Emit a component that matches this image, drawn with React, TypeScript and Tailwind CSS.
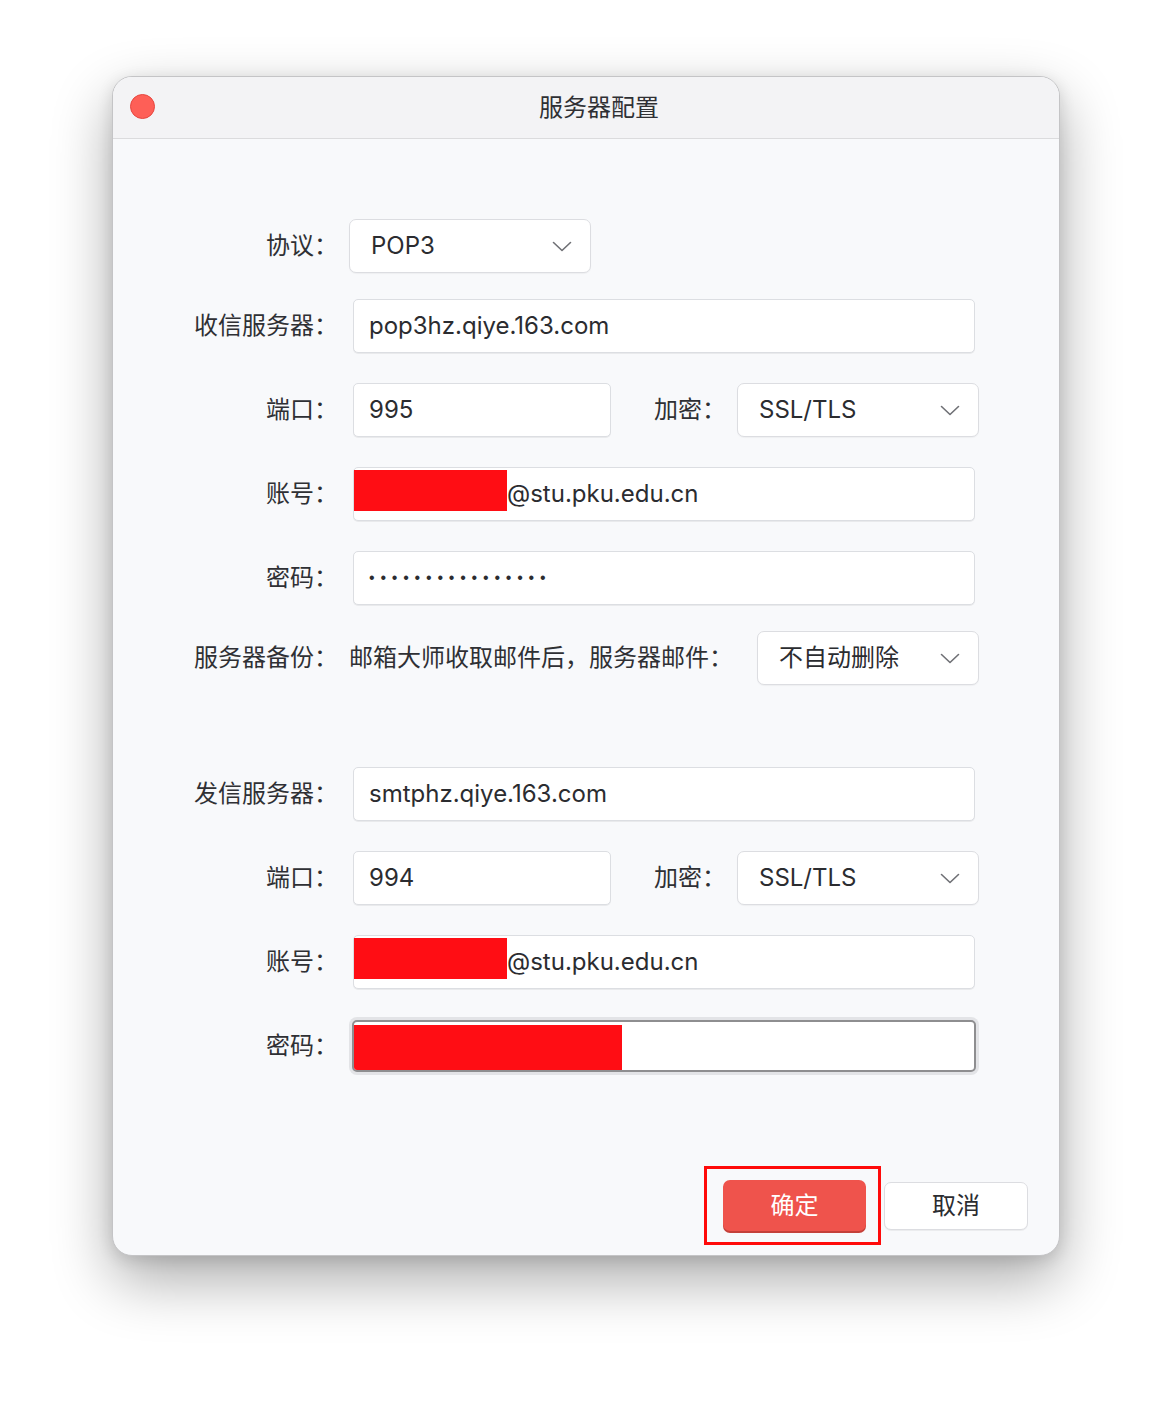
import React from 'react';

const Chevron = () => (
  <svg width="20" height="11" viewBox="0 0 20 11" fill="none" className="shrink-0">
    <path d="M1.5 1.5 L10 9.5 L18.5 1.5" stroke="#6f7075" strokeWidth="1.6" strokeLinecap="round" strokeLinejoin="round" />
  </svg>
);

const Label = ({ text, w = 'w-[225px]' }: { text: string; w?: string }) => (
  <div className={`${w} shrink-0 text-right text-[24px] leading-none text-[#2f3034]`}>{text}</div>
);

const Select = ({ value, w = 'w-[242px]' }: { value: string; w?: string }) => (
  <div className={`${w} h-[54px] shrink-0 flex items-center justify-between pl-[21px] pr-[18px] bg-white border-[1.5px] border-[#dcdde1] rounded-[7px] shadow-[0_1px_1px_rgba(0,0,0,0.04)]`}>
    <span className="text-[24px] leading-none text-[#2b2c30]">{value}</span>
    <Chevron />
  </div>
);

const Input = ({ children, w = 'w-[622px]' }: { children: React.ReactNode; w?: string }) => (
  <div className={`${w} h-[54px] ml-[4px] shrink-0 flex items-center pl-[15px] bg-white border border-[#dcdee2] rounded-[5px] shadow-[0_1px_0_rgba(0,0,0,0.06)] text-[24px] leading-none text-[#2b2c30]`}>
    {children}
  </div>
);

const Account = () => (
  <div className="w-[622px] h-[54px] ml-[4px] shrink-0 flex items-start bg-white border border-[#dcdee2] rounded-[5px] shadow-[0_1px_0_rgba(0,0,0,0.06)]">
    <div className="w-[153px] h-[41px] mt-[2px] bg-[#ff0d14]" />
    <span className="self-center text-[24px] leading-none text-[#2b2c30]">@stu.pku.edu.cn</span>
  </div>
);

const Row = ({ children, className = '' }: { children: React.ReactNode; className?: string }) => (
  <div className={`flex items-center gap-[11px] h-[54px] ${className}`}>{children}</div>
);

export default function App() {
  return (
    <div className="w-[1172px] h-[1404px] bg-white pt-[76px] pl-[112px] font-['Inter','Noto_Sans_CJK_SC',sans-serif]">
      <div className="w-[948px] h-[1180px] rounded-[20px] overflow-hidden bg-[#f8f9fb] border border-[#c4c4c6] shadow-[0_24px_60px_rgba(0,0,0,0.33),0_4px_16px_rgba(0,0,0,0.12)] flex flex-col">
        {/* Title bar */}
        <div className="relative h-[62px] shrink-0 flex items-center justify-center pl-[26px] bg-[#f3f3f5] border-b border-[#dbdbdd]">
          <div className="absolute left-[17px] top-[17px] w-[25px] h-[25px] rounded-full bg-[#fe5f57] border border-[#e5463f]" />
          <span className="text-[24px] leading-none text-[#2f3034]">服务器配置</span>
        </div>

        {/* Body */}
        <div className="flex-1 flex flex-col pt-[80px]">
          <Row>
            <Label text="协议：" />
            <Select value="POP3" />
          </Row>
          <Row className="mt-[26px]">
            <Label text="收信服务器：" />
            <Input>pop3hz.qiye.163.com</Input>
          </Row>
          <Row className="mt-[30px]">
            <Label text="端口：" />
            <Input w="w-[258px]">995</Input>
            <Label text="加密：" w="w-[104px]" />
            <Select value="SSL/TLS" />
          </Row>
          <Row className="mt-[30px]">
            <Label text="账号：" />
            <Account />
          </Row>
          <Row className="mt-[30px]">
            <Label text="密码：" />
            <Input>
              <span className="font-['Liberation_Sans',sans-serif] text-[16px] tracking-[5.8px] text-[#2b2c30]">••••••••••••••••</span>
            </Input>
          </Row>
          <Row className="mt-[26px]">
            <Label text="服务器备份：" />
            <div className="w-[630px] flex items-center justify-between">
              <span className="text-[24px] leading-none text-[#2f3034]">邮箱大师收取邮件后，服务器邮件：</span>
              <Select value="不自动删除" w="w-[222px]" />
            </div>
          </Row>

          <Row className="mt-[82px]">
            <Label text="发信服务器：" />
            <Input>smtphz.qiye.163.com</Input>
          </Row>
          <Row className="mt-[30px]">
            <Label text="端口：" />
            <Input w="w-[258px]">994</Input>
            <Label text="加密：" w="w-[104px]" />
            <Select value="SSL/TLS" />
          </Row>
          <Row className="mt-[30px]">
            <Label text="账号：" />
            <Account />
          </Row>
          <div className="flex items-center gap-[11px] h-[58px] mt-[28px]">
            <Label text="密码：" />
            <div className="w-[630px] h-[58px] p-[3px] rounded-[8px] bg-[#e3e4e7]">
              <div className="h-full flex items-start rounded-[5px] border-2 border-[#8e8e90] bg-white overflow-hidden">
                <div className="w-[268px] h-[45px] mt-[3px] bg-[#ff0d14]" />
              </div>
            </div>
          </div>

          {/* Buttons */}
          <div className="flex items-center justify-end mt-[91px] pr-[31px]">
            <div className="border-[3px] border-[#ff0a0a] pl-[16px] pr-[12px] py-[11px]">
              <button className="w-[143px] h-[51px] rounded-[7px] bg-[#ef534c] shadow-[0_2px_0_#c44039] text-[24px] leading-none text-white">
                确定
              </button>
            </div>
            <button className="ml-[3px] w-[144px] h-[48px] rounded-[7px] bg-white border border-[#dcdde1] shadow-[0_1px_0_rgba(0,0,0,0.05)] text-[24px] leading-none text-[#2b2c30]">
              取消
            </button>
          </div>
        </div>
      </div>
    </div>
  );
}
